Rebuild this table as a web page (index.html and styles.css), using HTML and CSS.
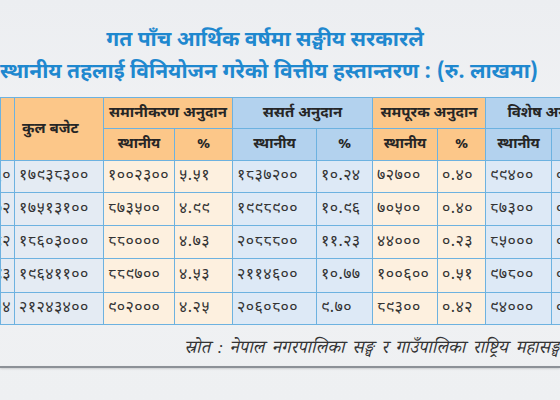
FILE: index.html
```html
<!DOCTYPE html>
<html lang="ne">
<head>
<meta charset="utf-8">
<title>वित्तीय हस्तान्तरण</title>
<link rel="stylesheet" href="styles.css">
</head>
<body>
<div class="page">
  <header class="title">
    <div class="line">गत पाँच आर्थिक वर्षमा सङ्घीय सरकारले</div>
    <div class="line">स्थानीय तहलाई विनियोजन गरेको वित्तीय हस्तान्तरण : (रु. लाखमा)</div>
  </header>
  <table class="grid">
    <colgroup>
      <col class="c-yr"><col class="c-tot"><col class="c-a"><col class="c-b"><col class="c-c"><col class="c-d"><col class="c-e"><col class="c-f"><col class="c-g"><col class="c-h">
    </colgroup>
    <thead>
      <tr class="h1">
        <th rowspan="2" class="or yr"><span>आ.व.</span></th>
        <th rowspan="2" class="or tot">कुल बजेट</th>
        <th colspan="2" class="or">समानीकरण अनुदान</th>
        <th colspan="2" class="bl">ससर्त अनुदान</th>
        <th colspan="2" class="or">समपूरक अनुदान</th>
        <th colspan="2" class="bl">विशेष अनुदान</th>
      </tr>
      <tr class="h2">
        <th class="or">स्थानीय</th><th class="or">%</th>
        <th class="bl">स्थानीय</th><th class="bl">%</th>
        <th class="or">स्थानीय</th><th class="or">%</th>
        <th class="bl">स्थानीय</th><th class="bl">%</th>
      </tr>
    </thead>
    <tbody>
      <tr class="r1">
        <td class="gy yr"><span>०७५/७६०</span></td><td class="gy">१७९३८३००</td>
        <td class="lo">१००२३००</td><td class="lo">५.५१</td>
        <td class="lb">१८३७२००</td><td class="lb">१०.२४</td>
        <td class="lo">७२७००</td><td class="lo">०.४०</td>
        <td class="lb">९९४००</td><td class="lb">०.५५</td>
      </tr>
      <tr class="r2">
        <td class="gy yr"><span>०७६/७७२</span></td><td class="gy">१७५१३१००</td>
        <td class="lo">८७३५००</td><td class="lo">४.९९</td>
        <td class="lb">१९९८९००</td><td class="lb">१०.९६</td>
        <td class="lo">७०५००</td><td class="lo">०.४०</td>
        <td class="lb">८७३००</td><td class="lb">०.५०</td>
      </tr>
      <tr class="r3">
        <td class="gy yr"><span>०७७/७८२</span></td><td class="gy">१८६०३०००</td>
        <td class="lo">८८००००</td><td class="lo">४.७३</td>
        <td class="lb">२०८८८००</td><td class="lb">११.२३</td>
        <td class="lo">४४०००</td><td class="lo">०.२३</td>
        <td class="lb">८५०००</td><td class="lb">०.४६</td>
      </tr>
      <tr class="r4">
        <td class="gy yr"><span>०७८/७९३</span></td><td class="gy">१९६४११००</td>
        <td class="lo">८८९७००</td><td class="lo">४.५३</td>
        <td class="lb">२११४६००</td><td class="lb">१०.७७</td>
        <td class="lo">१००६००</td><td class="lo">०.५१</td>
        <td class="lb">९७८००</td><td class="lb">०.५०</td>
      </tr>
      <tr class="r5">
        <td class="gy yr"><span>०७९/८०४</span></td><td class="gy">२१२४३४००</td>
        <td class="lo">९०२०००</td><td class="lo">४.२५</td>
        <td class="lb">२०६०८००</td><td class="lb">९.७०</td>
        <td class="lo">८९३००</td><td class="lo">०.४२</td>
        <td class="lb">९४०००</td><td class="lb">०.४४</td>
      </tr>
    </tbody>
  </table>
  <footer class="source">
    <p class="src-text">स्रोत : नेपाल नगरपालिका सङ्घ र गाउँपालिका राष्ट्रिय महासङ्घ</p>
    <div class="rule"></div>
  </footer>
</div>
</body>
</html>
```

FILE: styles.css
```css
html, body {
  margin: 0;
  padding: 0;
}
body {
  width: 560px;
  height: 400px;
  overflow: hidden;
  background: linear-gradient(180deg, #eceef1 0%, #f1f2f4 40%, #eef0f2 100%);
  font-family: "Noto Sans Devanagari", "Lohit Devanagari", "Noto Sans", "DejaVu Sans", sans-serif;
}
.page {
  width: 560px;
  height: 400px;
  display: flex;
  flex-direction: column;
}
.title {
  width: 530px;
  padding-top: 25px;
  height: 72px;
  box-sizing: content-box;
  text-align: center;
  color: #1f88cf;
  font-weight: 700;
  font-size: 21px;
}
.title .line {
  height: 32px;
  line-height: 32px;
  white-space: nowrap;
}
.grid {
  border-collapse: collapse;
  table-layout: fixed;
  width: 611px;
  flex: none;
  color: #2a2a2a;
}
.c-yr { width: 14px; }
.c-tot { width: 89px; }
.c-a { width: 71px; }
.c-b { width: 58px; }
.c-c { width: 84px; }
.c-d { width: 56px; }
.c-e { width: 65px; }
.c-f { width: 48px; }
.c-g { width: 66px; }
.c-h { width: 60px; }
.grid th, .grid td {
  border: 1px solid #6db2e0;
  padding: 0 4px;
  white-space: nowrap;
  overflow: hidden;
}
.grid th {
  font-size: 15px;
  font-weight: 700;
  color: #262626;
  text-align: center;
}
.grid th.tot {
  text-align: left;
  padding-left: 7px;
}
.grid .h1 { height: 31px; }
.grid .h2 { height: 32px; }
.grid .h2 th { font-size: 14.5px; }
.grid td {
  font-size: 16px;
  text-align: left;
  color: #333;
  letter-spacing: 0.4px;
}
.grid .r1 { height: 32px; }
.grid .r2 { height: 33px; }
.grid .r3 { height: 33px; }
.grid .r4 { height: 34px; }
.grid .r5 { height: 32px; }
.grid .yr {
  padding: 0;
  text-align: right;
}
.grid .yr span {
  display: block;
  float: right;
  white-space: nowrap;
  margin-right: 3px;
}
.grid th.yr span { visibility: hidden; }
.or { background: #fcc789; }
.bl { background: #b3d2ee; }
.gy { background: #e4ebf3; }
.lo { background: #fdf0df; }
.lb { background: #dde9f6; }
.source {
  display: flex;
  flex-direction: column;
  padding-top: 12px;
}
.src-text {
  margin: 0 0 0 184px;
  font-family: "FreeSerif", "Noto Serif Devanagari", "Liberation Serif", serif;
  font-style: italic;
  font-size: 18px;
  word-spacing: 3px;
  color: #333;
  white-space: nowrap;
  line-height: 22px;
}
.rule {
  margin-top: 7px;
  height: 2px;
  background: #8c9197;
  box-shadow: 0 1px 2px rgba(0, 0, 0, 0.15);
}
```
